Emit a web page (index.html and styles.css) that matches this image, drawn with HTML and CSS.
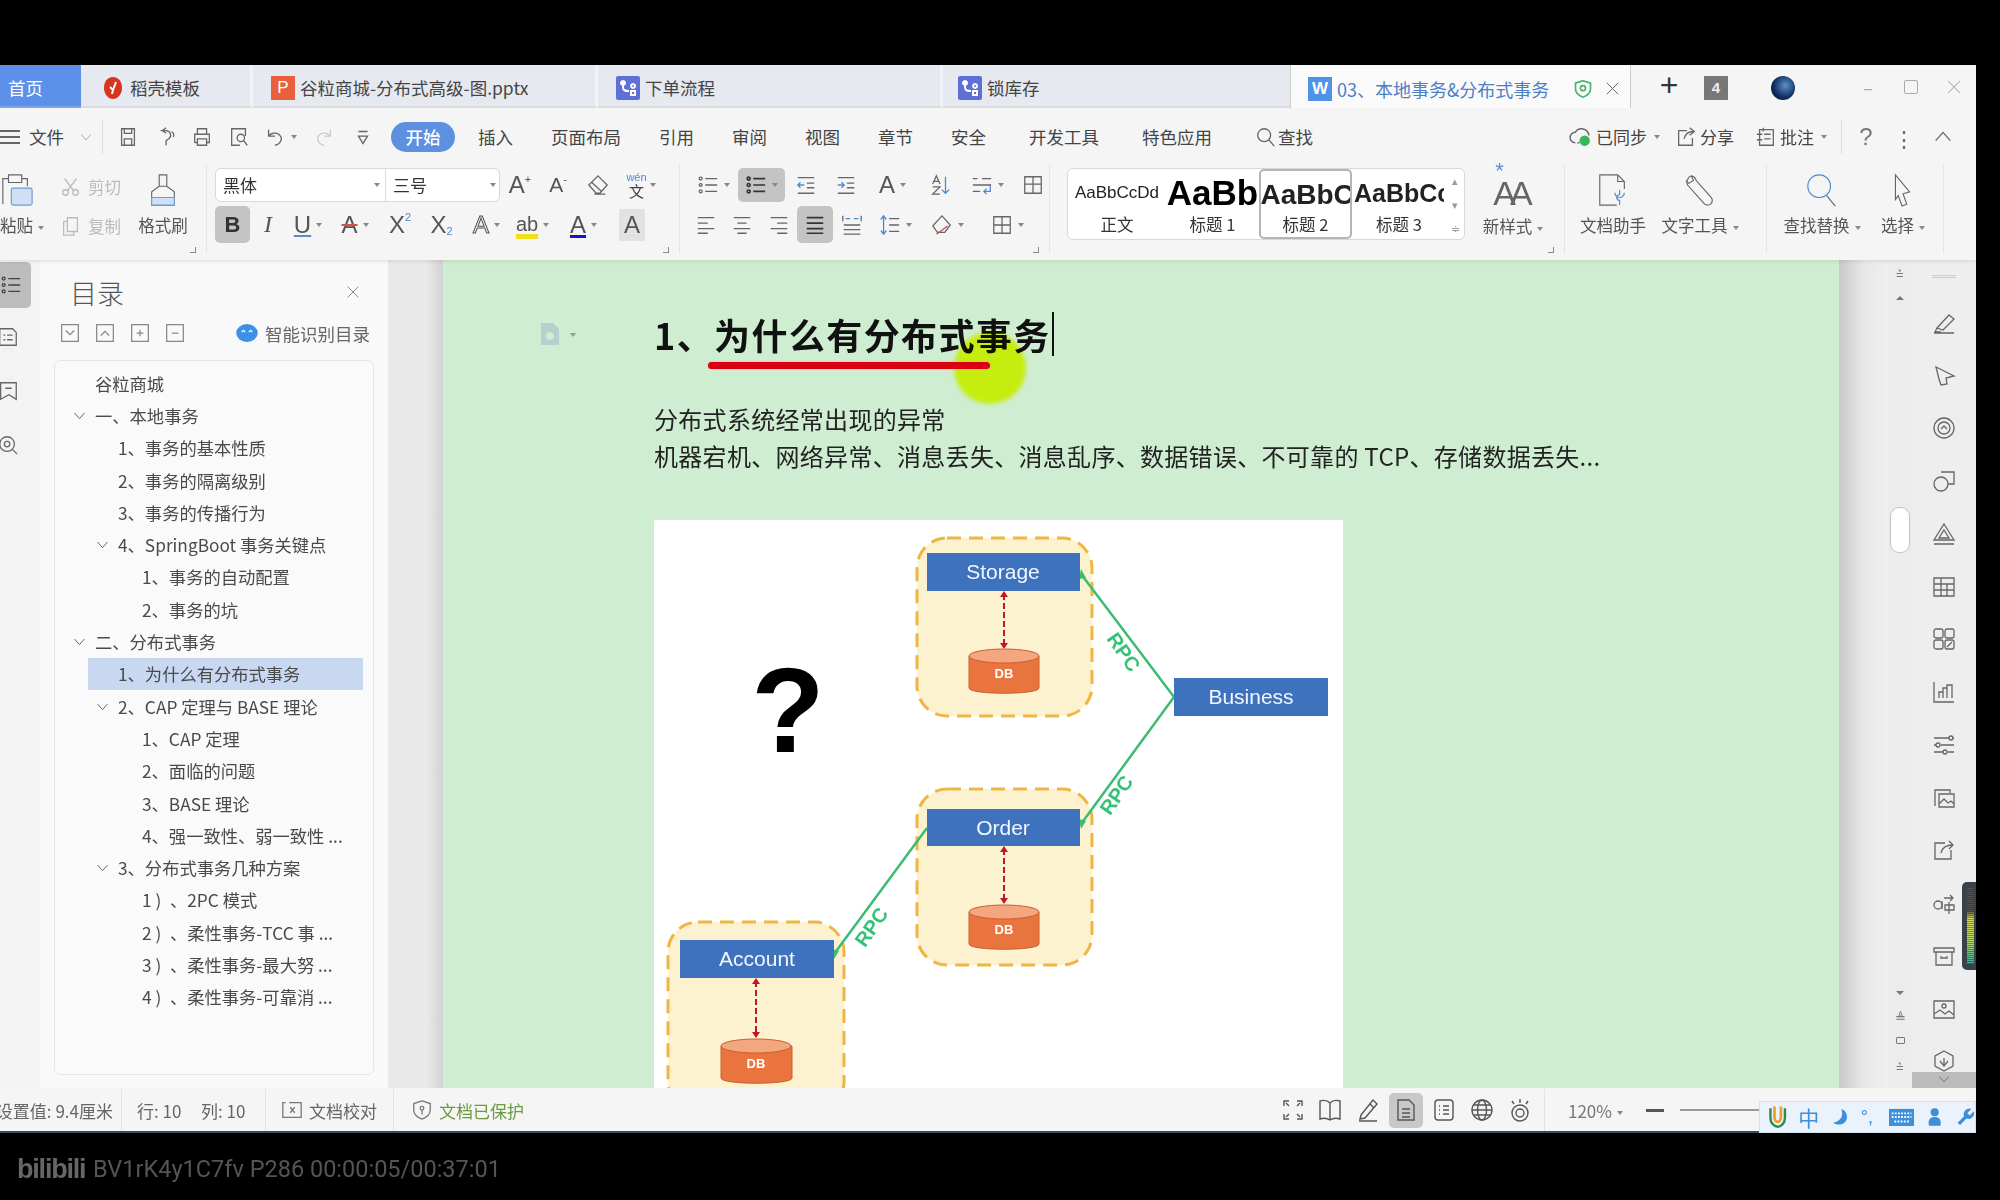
FILE: index.html
```html
<!DOCTYPE html>
<html lang="zh-CN">
<head>
    <meta charset="UTF-8">
    <title>03、本地事务&amp;分布式事务</title>
    <link rel="stylesheet" href="styles.css">
</head>
<body>
<svg class="defs" aria-hidden="true">
    <symbol id="i-save" viewBox="0 0 24 24"><path d="M5 3h14v18H5zM8 3v5h8V3M8 21v-7h8v7"/></symbol>
    <symbol id="i-link" viewBox="0 0 24 24"><path d="M5 5h6a5 5 0 0 1 3 9l-3 2v5M11 2l-4 3 4 3M17 6a5 5 0 0 1 2 6"/></symbol>
    <symbol id="i-print" viewBox="0 0 24 24"><path d="M7 9V3h10v6M4 18V9h16v9h-3M7 14h10v7H7zM7 18H4"/></symbol>
    <symbol id="i-preview" viewBox="0 0 24 24"><path d="M19 11V3H4v18h9M10 13a4 4 0 1 0 8 0 4 4 0 0 0-8 0M17 16l4 5"/></symbol>
    <symbol id="i-undo" viewBox="0 0 24 24"><path d="M5 4v7h7M5 11a8 8 0 0 1 14 2 8 8 0 0 1-7 8"/></symbol>
    <symbol id="i-redo" viewBox="0 0 24 24"><path d="M19 4v7h-7M19 11A8 8 0 0 0 5 13a8 8 0 0 0 7 8"/></symbol>
    <symbol id="i-more" viewBox="0 0 24 24"><path d="M7 6h10M7 11l5 8 5-8z"/></symbol>
    <symbol id="i-search" viewBox="0 0 24 24"><circle cx="10" cy="10" r="7"/><path d="M15 15l6 7"/></symbol>
    <symbol id="i-cloud" viewBox="0 0 24 24"><path d="M7 18a5 5 0 0 1 0-10 7 7 0 0 1 13 3M9 18h2"/><circle class="green" cx="16" cy="16" r="5"/></symbol>
    <symbol id="i-share" viewBox="0 0 24 24"><path d="M13 5H4v16h15v-8M10 14c1-5 4-8 10-8M16 2l5 4-5 4"/></symbol>
    <symbol id="i-note" viewBox="0 0 24 24"><path d="M5 4h15v17H5zM2 9h6M2 15h6M10 9h7M10 14h7M9 2v4"/></symbol>
    <symbol id="i-paste" viewBox="0 0 36 36"><path d="M3 33V6h6V2h14v4h6v8M9 6v4h14V6"/><rect class="tint" x="12" y="16" width="22" height="18" rx="2"/></symbol>
    <symbol id="i-scissors" viewBox="0 0 24 24"><circle cx="6" cy="18" r="3"/><circle cx="17" cy="18" r="3"/><path d="M8 16L18 3M15 16L5 3"/></symbol>
    <symbol id="i-copy" viewBox="0 0 24 24"><path d="M8 3h11v15H8zM8 7H4v15h11v-4"/></symbol>
    <symbol id="i-brush" viewBox="0 0 36 36"><path d="M14 2h8v12h-8zM14 14L6 20v14h24V20l-8-6"/><path class="tint" d="M6 26h24v8H6z"/></symbol>
    <symbol id="i-eraser" viewBox="0 0 24 24"><path d="M12 2l10 10-8 9H10l-8-9zM5 9l11 10M8 22h12"/></symbol>
    <symbol id="i-bullets" viewBox="0 0 24 24"><path d="M9 5h13M9 12h13M9 19h13"/><circle cx="4" cy="5" r="1.6"/><circle cx="4" cy="12" r="1.6"/><circle cx="4" cy="19" r="1.6"/></symbol>
    <symbol id="i-outdent" viewBox="0 0 24 24"><path d="M3 4h18M13 10h8M13 15h8M3 21h18"/><path class="blue" d="M10 12H3M6 9l-3 3 3 3"/></symbol>
    <symbol id="i-indent" viewBox="0 0 24 24"><path d="M3 4h18M13 10h8M13 15h8M3 21h18"/><path class="blue" d="M3 12h7M7 9l3 3-3 3"/></symbol>
    <symbol id="i-sort" viewBox="0 0 24 24"><path class="blue" d="M18 3v18M14 17l4 4 4-4"/><path d="M4 11l4-9 4 9M5 8h6M4 14h8l-8 8h8"/></symbol>
    <symbol id="i-wrap" viewBox="0 0 24 24"><path d="M2 5h5M12 5h10M2 12h20M2 19h8"/><path class="blue" d="M21 12v7h-7M17 16l-3 3 3 3"/></symbol>
    <symbol id="i-table-split" viewBox="0 0 24 24"><path d="M3 3h18v18H3zM3 11h18M12 3v18"/></symbol>
    <symbol id="i-left" viewBox="0 0 24 24"><path d="M3 4h18M3 10h11M3 16h18M3 21h11"/></symbol>
    <symbol id="i-center" viewBox="0 0 24 24"><path d="M3 4h18M7 10h10M3 16h18M7 21h10"/></symbol>
    <symbol id="i-right" viewBox="0 0 24 24"><path d="M3 4h18M10 10h11M3 16h18M10 21h11"/></symbol>
    <symbol id="i-justify" viewBox="0 0 24 24"><path d="M3 4h18M3 10h18M3 16h18M3 21h18"/></symbol>
    <symbol id="i-dist" viewBox="0 0 24 24"><path d="M3 12h18M3 17h18M3 22h18M2 2v6M22 2v6"/><path class="blue" d="M5 5h5M14 5h5"/></symbol>
    <symbol id="i-spacing" viewBox="0 0 24 24"><path d="M11 5h11M11 12h11M11 19h11"/><path class="blue" d="M5 2v20M2 6l3-4 3 4M2 18l3 4 3-4"/></symbol>
    <symbol id="i-shade" viewBox="0 0 24 24"><path d="M12 2l9 10-6 8H7l-5-7z"/><path class="red" d="M6 22L18 13"/></symbol>
    <symbol id="i-border" viewBox="0 0 24 24"><path d="M3 3h18v18H3zM12 3v18M3 12h18"/></symbol>
    <symbol id="i-doc-help" viewBox="0 0 36 36"><path d="M22 34H4V2h19l7 7v8M23 2v7h7"/><path class="blue" d="M25 18v5a3 3 0 0 0 0 6v5M20 21a5 5 0 0 0 10 0"/></symbol>
    <symbol id="i-wrench" viewBox="0 0 36 36"><path d="M9 3a7 7 0 0 0-4 10l17 19a4 4 0 0 0 8-6L14 8a7 7 0 0 0-5-5zM9 3l2 5-5 3-3-3"/></symbol>
    <symbol id="i-lens" viewBox="0 0 36 36"><circle class="blue" cx="15" cy="14" r="12"/><path d="M23 24l9 11"/></symbol>
    <symbol id="i-pointer" viewBox="0 0 36 36"><path d="M10 2l15 18-7 2 4 11-5 2-4-11-3 4z"/></symbol>
    <symbol id="i-list-r" viewBox="0 0 24 24"><path d="M3 3h14l4 4v14H3zM7 10h2M11 10h6M7 15h2M11 15h6"/></symbol>
    <symbol id="i-bookmark" viewBox="0 0 24 24"><path d="M4 3h17v18l-8-5-9 5zM9 9h7"/></symbol>
    <symbol id="i-find-doc" viewBox="0 0 24 24"><circle cx="11" cy="11" r="8"/><circle cx="11" cy="11" r="3"/><path d="M17 17l5 5"/></symbol>
    <symbol id="i-square-down" viewBox="0 0 24 24"><path d="M2 2h20v20H2zM7 9l5 5 5-5"/></symbol>
    <symbol id="i-square-up" viewBox="0 0 24 24"><path d="M2 2h20v20H2zM7 15l5-5 5 5"/></symbol>
    <symbol id="i-square-plus" viewBox="0 0 24 24"><path d="M2 2h20v20H2zM8 12h8M12 8v8"/></symbol>
    <symbol id="i-square-minus" viewBox="0 0 24 24"><path d="M2 2h20v20H2zM8 12h8"/></symbol>
    <symbol id="i-chev" viewBox="0 0 24 24"><path d="M4 8l8 9 8-9"/></symbol>
    <symbol id="i-close" viewBox="0 0 24 24"><path d="M4 4l16 16M20 4L4 20"/></symbol>
    <symbol id="t-pen" viewBox="0 0 24 24"><path d="M2 22h20M5 17L17 4l5 4-11 11zM5 17l-2 4h6"/></symbol>
    <symbol id="t-cursor" viewBox="0 0 24 24"><path d="M4 3l18 9-8 2 1 6-6 1-2-6z"/></symbol>
    <symbol id="t-badge" viewBox="0 0 24 24"><circle cx="12" cy="12" r="10"/><circle cx="12" cy="12" r="6"/><path d="M9 13l3-3 3 3"/></symbol>
    <symbol id="t-shapes" viewBox="0 0 24 24"><path d="M9 3h13v12H16"/><circle cx="9" cy="15" r="7"/></symbol>
    <symbol id="t-tri" viewBox="0 0 24 24"><path d="M12 2l10 16H2zM12 8l5 8H7zM2 22h20"/></symbol>
    <symbol id="t-table" viewBox="0 0 24 24"><path d="M2 3h20v18H2zM2 9h20M2 15h20M9 3v18M15 9v12"/></symbol>
    <symbol id="t-grid" viewBox="0 0 24 24"><rect x="2" y="2" width="9" height="9" rx="2"/><rect x="13" y="2" width="9" height="9" rx="2"/><rect x="2" y="13" width="9" height="9" rx="2"/><rect x="13" y="13" width="9" height="9" rx="2"/><path d="M15 20l5-5"/></symbol>
    <symbol id="t-chart" viewBox="0 0 24 24"><path d="M2 2v20h20M7 18v-6h4v6M11 18V8h4v10M15 18V5h5v13"/></symbol>
    <symbol id="t-sliders" viewBox="0 0 24 24"><path d="M2 5h15M21 5h1M2 12h2M9 12h13M2 19h9M16 19h6"/><circle cx="19" cy="5" r="2"/><circle cx="6" cy="12" r="2"/><circle cx="13" cy="19" r="2"/></symbol>
    <symbol id="t-images" viewBox="0 0 24 24"><path d="M3 20V4h15v3M7 8h15v13H7zM7 18l5-5 4 4 3-2 3 3"/></symbol>
    <symbol id="t-export" viewBox="0 0 24 24"><path d="M13 5H3v16h16v-9M9 15c1-5 5-8 12-8M17 3l4 4-4 4"/></symbol>
    <symbol id="t-translate" viewBox="0 0 24 24"><circle cx="6" cy="14" r="4"/><path d="M10 10v8M12 7h9M18 4l3 3-3 3M13 14h9v5h-9zM17 11v12"/></symbol>
    <symbol id="t-box" viewBox="0 0 24 24"><path d="M2 4h20v4H2zM4 8v13h16V8M9 12v2h6v-2"/></symbol>
    <symbol id="t-picture" viewBox="0 0 24 24"><path d="M2 4h20v17H2zM2 17l6-4 5 4 4-3 5 4"/><circle cx="12" cy="9" r="2"/></symbol>
    <symbol id="t-hex" viewBox="0 0 24 24"><path d="M12 2l9 5v10l-9 5-9-5V7zM12 9v8M8 12l4 5 4-5"/></symbol>
    <symbol id="s-fit" viewBox="0 0 24 24"><path d="M3 8V3h5M21 8V3h-5M3 16v5h5M21 16v5h-5M8 8L5 5M16 8l3-3M8 16l-3 3M16 16l3 3"/></symbol>
    <symbol id="s-book" viewBox="0 0 24 24"><path d="M12 5C9 2 5 2 2 3v18c3-1 7-1 10 1 3-2 7-2 10-1V3c-3-1-7-1-10 2zM12 5v17"/></symbol>
    <symbol id="s-pen" viewBox="0 0 24 24"><path d="M5 17L17 2l4 4L9 20l-5 1zM3 23h18M14 6l4 4"/></symbol>
    <symbol id="s-page" viewBox="0 0 24 24"><path d="M4 2h11l5 5v15H4zM8 11h8M8 15h8M8 19h8"/></symbol>
    <symbol id="s-outline" viewBox="0 0 24 24"><rect x="3" y="2" width="18" height="20" rx="3"/><path d="M7 8h1M11 8h6M7 12h1M11 12h6M7 16h1M11 16h6"/></symbol>
    <symbol id="s-globe" viewBox="0 0 24 24"><circle cx="12" cy="12" r="10"/><ellipse cx="12" cy="12" rx="4.5" ry="10"/><path d="M2 12h20M4 7h16M4 17h16"/></symbol>
    <symbol id="s-eye" viewBox="0 0 24 24"><circle cx="12" cy="15" r="8"/><circle cx="12" cy="15" r="4"/><path d="M12 1v4M4 3l2 3M20 3l-2 3"/></symbol>
    <symbol id="s-proof" viewBox="0 0 24 24"><path d="M9 4h13v16H2V4h3M2 20M10 9l5 6M15 9l-5 6"/></symbol>
    <symbol id="s-shield" viewBox="0 0 24 24"><path d="M12 2l9 3v7c0 5-4 8-9 10-5-2-9-5-9-10V5z"/><circle cx="12" cy="10" r="2"/><path d="M12 12v5"/></symbol>
</svg>

<div class="screen">
    <div class="topband"></div>

    <div class="window">
        <!-- tabs -->
        <div class="tabbar">
            <div class="tab tab-home">首页</div>
            <div class="tab tab-w169">
                <svg class="tabicon" viewBox="0 0 20 24"><path fill="#d8351f" d="M10 1c6 0 9 5 9 11s-4 11-9 11-9-5-9-11S4 1 10 1z"/><path fill="none" stroke="#fff" stroke-width="2" d="M13 6l-3 8-3-3M10 14l-1 4"/></svg>
                稻壳模板
            </div>
            <div class="tab tab-w345">
                <span class="tabicon ppt">P</span>
                谷粒商城-分布式高级-图.pptx
            </div>
            <div class="tab tab-w345">
                <svg class="tabicon" viewBox="0 0 24 24"><rect width="24" height="24" rx="2" fill="#5f6fd8"/><path fill="none" stroke="#fff" stroke-width="2" d="M7 5v6c0 4 3 4 6 4M7 5a2 2 0 1 0 .1 0M17 8a2 2 0 1 0 .1 0M15 15h4v4h-4z"/></svg>
                下单流程
            </div>
            <div class="tab tab-w348">
                <svg class="tabicon" viewBox="0 0 24 24"><rect width="24" height="24" rx="2" fill="#5f6fd8"/><path fill="none" stroke="#fff" stroke-width="2" d="M7 5v6c0 4 3 4 6 4M7 5a2 2 0 1 0 .1 0M17 8a2 2 0 1 0 .1 0M15 15h4v4h-4z"/></svg>
                锁库存
            </div>
            <div class="tab tab-active">
                <span class="tabicon word">W</span>
                <span class="tab-title">03、本地事务&amp;分布式事务</span>
                <svg class="tab-shield" viewBox="0 0 24 24"><path d="M12 2l9 3v7c0 5-4 8-9 10-5-2-9-5-9-10V5z"/><circle cx="12" cy="11" r="3"/></svg>
                <svg class="ic tab-close"><use href="#i-close"/></svg>
            </div>
            <div class="tab-plus">+</div>
            <div class="tab-count">4</div>
            <div class="avatar"></div>
            <div class="winbtns">
                <span class="winbtn">–</span>
                <span class="winbtn winbtn-restore"></span>
                <svg class="ic winx"><use href="#i-close"/></svg>
            </div>
        </div>

        <!-- menu row -->
        <div class="menubar">
            <div class="filemenu">
                <span class="burger"></span>
                <span>文件</span>
                <svg class="ic chev-s"><use href="#i-chev"/></svg>
            </div>
            <div class="qat">
                <svg class="ic"><use href="#i-save"/></svg>
                <svg class="ic"><use href="#i-link"/></svg>
                <svg class="ic"><use href="#i-print"/></svg>
                <svg class="ic"><use href="#i-preview"/></svg>
                <span class="qat-drop"><svg class="ic"><use href="#i-undo"/></svg><i class="tri"></i></span>
                <svg class="ic ic-dim"><use href="#i-redo"/></svg>
                <svg class="ic"><use href="#i-more"/></svg>
            </div>
            <div class="menutabs">
                <span class="pill">开始</span>
                <span>插入</span>
                <span>页面布局</span>
                <span>引用</span>
                <span>审阅</span>
                <span>视图</span>
                <span>章节</span>
                <span>安全</span>
                <span class="far">开发工具</span>
                <span class="far">特色应用</span>
                <span class="find far"><svg class="ic"><use href="#i-search"/></svg>查找</span>
            </div>
            <div class="menuright">
                <span class="mr mr-sync"><svg class="ic"><use href="#i-cloud"/></svg>已同步<i class="tri"></i></span>
                <span class="mr mr-share"><svg class="ic"><use href="#i-share"/></svg>分享</span>
                <span class="mr mr-note"><svg class="ic"><use href="#i-note"/></svg>批注<i class="tri"></i></span>
                <span class="mr-q">?</span>
                <span class="mr-dots">⋮</span>
                <svg class="ic mr-up"><use href="#i-chev"/></svg>
            </div>
        </div>

        <!-- ribbon -->
        <div class="ribbon">
            <div class="group g-clip">
                <div class="big">
                    <svg class="ic ic-big"><use href="#i-paste"/></svg>
                    <span class="big-label">粘贴<i class="tri"></i></span>
                </div>
                <div class="clip-col">
                    <span class="clip-item"><svg class="ic"><use href="#i-scissors"/></svg>剪切</span>
                    <span class="clip-item"><svg class="ic"><use href="#i-copy"/></svg>复制</span>
                </div>
                <div class="big">
                    <svg class="ic ic-big"><use href="#i-brush"/></svg>
                    <span class="big-label">格式刷</span>
                </div>
                <i class="corner"></i>
            </div>

            <div class="group g-font">
                <div class="row font-r1">
                    <div class="combo">
                        <span class="combo-name">黑体<i class="tri"></i></span>
                        <span class="combo-size">三号<i class="tri"></i></span>
                    </div>
                    <span class="cell glyph">A<sup>+</sup></span>
                    <span class="cell glyph glyph-s">A<sup>-</sup></span>
                    <span class="cell"><svg class="ic"><use href="#i-eraser"/></svg></span>
                    <span class="cell wen"><span class="wen-stack"><b>wén</b><span>文</span></span><i class="tri"></i></span>
                </div>
                <div class="row font-r2">
                    <span class="cell hl bold">B</span>
                    <span class="cell glyph italic">I</span>
                    <span class="cell glyph under">U<i class="tri"></i></span>
                    <span class="cell glyph strike">A<i class="tri"></i></span>
                    <span class="cell glyph">X<sup class="blue-t">2</sup></span>
                    <span class="cell glyph">X<sub class="blue-t">2</sub></span>
                    <span class="cell glyph outline">A<i class="tri"></i></span>
                    <span class="cell glyph mark">ab<i class="tri"></i></span>
                    <span class="cell glyph color-a">A<i class="tri"></i></span>
                    <span class="cell glyph shade-a">A</span>
                </div>
                <i class="corner"></i>
            </div>

            <div class="group g-para">
                <div class="row para-r1">
                    <span class="cell"><svg class="ic"><use href="#i-bullets"/></svg><i class="tri"></i></span>
                    <span class="cell hl"><svg class="ic ic-dark"><use href="#i-bullets"/></svg><i class="tri"></i></span>
                    <span class="cell"><svg class="ic"><use href="#i-outdent"/></svg></span>
                    <span class="cell"><svg class="ic"><use href="#i-indent"/></svg></span>
                    <span class="cell glyph">A<i class="tri"></i></span>
                    <span class="cell"><svg class="ic"><use href="#i-sort"/></svg></span>
                    <span class="cell"><svg class="ic"><use href="#i-wrap"/></svg><i class="tri"></i></span>
                    <span class="cell"><svg class="ic"><use href="#i-table-split"/></svg></span>
                </div>
                <div class="row para-r2">
                    <span class="cell"><svg class="ic"><use href="#i-left"/></svg></span>
                    <span class="cell"><svg class="ic"><use href="#i-center"/></svg></span>
                    <span class="cell"><svg class="ic"><use href="#i-right"/></svg></span>
                    <span class="cell hl"><svg class="ic ic-dark"><use href="#i-justify"/></svg></span>
                    <span class="cell"><svg class="ic"><use href="#i-dist"/></svg></span>
                    <span class="cell"><svg class="ic"><use href="#i-spacing"/></svg><i class="tri"></i></span>
                    <span class="cell"><svg class="ic"><use href="#i-shade"/></svg><i class="tri"></i></span>
                    <span class="cell"><svg class="ic"><use href="#i-border"/></svg><i class="tri"></i></span>
                </div>
                <i class="corner"></i>
            </div>

            <div class="group g-styles">
                <div class="stylebox">
                    <div class="style-item"><span class="sample s0">AaBbCcDd</span><span class="style-name">正文</span></div>
                    <div class="style-item"><span class="sample s1">AaBb</span><span class="style-name">标题 1</span></div>
                    <div class="style-item style-on"><span class="sample s2">AaBbC</span><span class="style-name">标题 2</span></div>
                    <div class="style-item"><span class="sample s3">AaBbCc</span><span class="style-name">标题 3</span></div>
                    <div class="style-scroll"><i>▴</i><i>▾</i><i>≑</i></div>
                </div>
                <div class="big big-new">
                    <span class="newstyle"><em>*</em>AA</span>
                    <span class="big-label">新样式<i class="tri"></i></span>
                </div>
                <i class="corner"></i>
            </div>

            <div class="group g-tools">
                <div class="big big-96">
                    <svg class="ic ic-big"><use href="#i-doc-help"/></svg>
                    <span class="big-label">文档助手</span>
                </div>
                <div class="big big-78">
                    <svg class="ic ic-big"><use href="#i-wrench"/></svg>
                    <span class="big-label">文字工具<i class="tri"></i></span>
                </div>
            </div>

            <div class="group g-find">
                <div class="big big-94">
                    <svg class="ic ic-big"><use href="#i-lens"/></svg>
                    <span class="big-label">查找替换<i class="tri"></i></span>
                </div>
                <div class="big big-68">
                    <svg class="ic ic-big"><use href="#i-pointer"/></svg>
                    <span class="big-label">选择<i class="tri"></i></span>
                </div>
            </div>
        </div>

        <!-- main area -->
        <div class="main">
            <div class="rail">
                <div class="rail-btn"><svg class="ic"><use href="#i-bullets"/></svg></div>
                <svg class="ic rail-ic"><use href="#i-list-r"/></svg>
                <svg class="ic rail-ic"><use href="#i-bookmark"/></svg>
                <svg class="ic rail-ic"><use href="#i-find-doc"/></svg>
            </div>

            <div class="toc-panel">
                <div class="toc-head">
                    <span class="toc-title">目录</span>
                    <svg class="ic toc-close"><use href="#i-close"/></svg>
                </div>
                <div class="toc-tools">
                    <svg class="ic"><use href="#i-square-down"/></svg>
                    <svg class="ic"><use href="#i-square-up"/></svg>
                    <svg class="ic"><use href="#i-square-plus"/></svg>
                    <svg class="ic"><use href="#i-square-minus"/></svg>
                    <span class="smart">
                        <svg class="smart-ic" viewBox="0 0 24 20"><ellipse cx="12" cy="10" rx="12" ry="10" fill="#3d8fe8"/><path d="M6 9l2-2 2 2M14 9l2-2 2 2" fill="none" stroke="#fff" stroke-width="1.4"/></svg>
                        智能识别目录
                    </span>
                </div>
                <div class="toc-box">
                    <div class="toc-row l0">谷粒商城</div>
                    <div class="toc-row l0"><svg class="ic arrow"><use href="#i-chev"/></svg>一、本地事务</div>
                    <div class="toc-row l1">1、事务的基本性质</div>
                    <div class="toc-row l1">2、事务的隔离级别</div>
                    <div class="toc-row l1">3、事务的传播行为</div>
                    <div class="toc-row l1"><svg class="ic arrow"><use href="#i-chev"/></svg>4、SpringBoot 事务关键点</div>
                    <div class="toc-row l2">1、事务的自动配置</div>
                    <div class="toc-row l2">2、事务的坑</div>
                    <div class="toc-row l0"><svg class="ic arrow"><use href="#i-chev"/></svg>二、分布式事务</div>
                    <div class="toc-row l1 toc-on">1、为什么有分布式事务</div>
                    <div class="toc-row l1"><svg class="ic arrow"><use href="#i-chev"/></svg>2、CAP 定理与 BASE 理论</div>
                    <div class="toc-row l2">1、CAP 定理</div>
                    <div class="toc-row l2">2、面临的问题</div>
                    <div class="toc-row l2">3、BASE 理论</div>
                    <div class="toc-row l2">4、强一致性、弱一致性 ...</div>
                    <div class="toc-row l1"><svg class="ic arrow"><use href="#i-chev"/></svg>3、分布式事务几种方案</div>
                    <div class="toc-row l2">1&nbsp;)&ensp;、2PC 模式</div>
                    <div class="toc-row l2">2&nbsp;)&ensp;、柔性事务-TCC 事 ...</div>
                    <div class="toc-row l2">3&nbsp;)&ensp;、柔性事务-最大努 ...</div>
                    <div class="toc-row l2">4&nbsp;)&ensp;、柔性事务-可靠消 ...</div>
                </div>
            </div>

            <div class="gutter"></div>

            <div class="doc">
                <svg class="margin-ic" viewBox="0 0 20 24"><path d="M1 1h12l6 6v16H1z"/><circle cx="10" cy="14" r="4" fill="#cfeccf"/></svg>
                <i class="margin-tri"></i>
                <div class="doc-body">
                    <h1 class="doc-title">1、为什么有分布式事务<span class="caret"></span></h1>
                    <p class="doc-text">分布式系统经常出现的异常<br>机器宕机、网络异常、消息丢失、消息乱序、数据错误、不可靠的 TCP、存储数据丢失...</p>
                    <svg class="diagram" viewBox="0 0 689 568">
                        <text class="q" x="134" y="232" text-anchor="middle">?</text>

                        <rect class="zone" x="263" y="18" width="175" height="178" rx="30"/>
                        <rect class="zone" x="263" y="269" width="175" height="176" rx="30"/>
                        <rect class="zone" x="14" y="402" width="176" height="190" rx="30"/>

                        <path class="rpc-line" d="M427 54L520 177L427 304M273 308L180 434"/>
                        <path class="rpc-tip" d="M427 49l5 9-7 1zM427 309l5-8-7-2zM180 439l5-8-7-2z"/>

                        <rect class="node" x="273" y="33" width="153" height="38"/>
                        <text class="node-t" x="349" y="59">Storage</text>
                        <rect class="node" x="520" y="158" width="154" height="38"/>
                        <text class="node-t" x="597" y="184">Business</text>
                        <rect class="node" x="273" y="289" width="153" height="37"/>
                        <text class="node-t" x="349" y="315">Order</text>
                        <rect class="node" x="26" y="420" width="154" height="38"/>
                        <text class="node-t" x="103" y="446">Account</text>

                        <path class="db-link" d="M350 74v52M350 329v52M102 461v56"/>
                        <path class="db-tip" d="M346 77l4-6 4 6zM346 123l4 6 4-6zM346 332l4-6 4 6zM346 378l4 6 4-6zM98 464l4-6 4 6zM98 512l4 6 4-6z"/>

                        <path class="db-body" d="M315 136v32c0 7 70 7 70 0v-32z"/>
                        <ellipse class="db-top" cx="350" cy="136" rx="35" ry="7"/>
                        <text class="db-t" x="350" y="158">DB</text>
                        <path class="db-body" d="M315 392v32c0 7 70 7 70 0v-32z"/>
                        <ellipse class="db-top" cx="350" cy="392" rx="35" ry="7"/>
                        <text class="db-t" x="350" y="414">DB</text>
                        <path class="db-body" d="M67 526v32c0 7 71 7 71 0v-32z"/>
                        <ellipse class="db-top" cx="102" cy="526" rx="35" ry="7"/>
                        <text class="db-t" x="102" y="548">DB</text>

                        <text class="rpc" transform="translate(464 136) rotate(55)">RPC</text>
                        <text class="rpc" transform="translate(468 279) rotate(-55)">RPC</text>
                        <text class="rpc" transform="translate(223 411) rotate(-55)">RPC</text>
                    </svg>
                </div>
                <!-- presenter's pen and pointer over the page -->
                <div class="pointer"></div>
                <div class="pen-line"></div>
            </div>

            <div class="gutter-r"></div>

            <div class="vscroll">
                <span class="vs-top">⩮</span>
                <span class="vs-up"></span>
                <span class="vs-thumb"></span>
                <span class="vs-down"></span>
                <span class="vs-mini">≜</span>
                <span class="vs-dot"></span>
                <span class="vs-mini">⩮</span>
            </div>

            <div class="toolstrip">
                <span class="strip-grip"></span>
                <svg class="ic"><use href="#t-pen"/></svg>
                <svg class="ic"><use href="#t-cursor"/></svg>
                <svg class="ic"><use href="#t-badge"/></svg>
                <svg class="ic"><use href="#t-shapes"/></svg>
                <svg class="ic"><use href="#t-tri"/></svg>
                <svg class="ic"><use href="#t-table"/></svg>
                <svg class="ic"><use href="#t-grid"/></svg>
                <svg class="ic"><use href="#t-chart"/></svg>
                <svg class="ic"><use href="#t-sliders"/></svg>
                <svg class="ic"><use href="#t-images"/></svg>
                <svg class="ic"><use href="#t-export"/></svg>
                <svg class="ic"><use href="#t-translate"/></svg>
                <svg class="ic"><use href="#t-box"/></svg>
                <svg class="ic"><use href="#t-picture"/></svg>
                <svg class="ic"><use href="#t-hex"/></svg>
                <div class="strip-foot"><svg class="ic"><use href="#i-chev"/></svg></div>
                <div class="meter"><i></i></div>
            </div>
        </div>

        <!-- status bar -->
        <div class="statusbar">
            <span class="st st-pos">设置值: 9.4厘米</span>
            <span class="st st-line">行: 10</span>
            <span class="st st-col">列: 10</span>
            <span class="st st-proof"><svg class="ic"><use href="#s-proof"/></svg>文档校对</span>
            <span class="st st-safe"><svg class="ic"><use href="#s-shield"/></svg>文档已保护</span>
            <div class="views">
                <svg class="ic"><use href="#s-fit"/></svg>
                <svg class="ic"><use href="#s-book"/></svg>
                <svg class="ic"><use href="#s-pen"/></svg>
                <span class="view-on"><svg class="ic"><use href="#s-page"/></svg></span>
                <svg class="ic"><use href="#s-outline"/></svg>
                <svg class="ic"><use href="#s-globe"/></svg>
                <svg class="ic"><use href="#s-eye"/></svg>
            </div>
            <span class="zoomval">120%<i class="tri"></i></span>
            <span class="zoom-minus"></span>
            <span class="zoom-line"></span>
        </div>
        <!-- input method bar sits over the status bar -->
        <div class="ime">
            <svg class="ime-u" viewBox="0 0 24 32"><path d="M3 5v12a9 11 0 0 0 18 0V5" fill="none" stroke="#2e8b57" stroke-width="3"/><path d="M8 3v13a4 6 0 0 0 8 0V3" fill="none" stroke="#f0a020" stroke-width="3.4"/></svg>
            <span class="ime-t">中</span>
            <svg class="ime-s" viewBox="0 0 24 24"><path d="M14 2c3 8 0 15-10 17 8 6 18 0 17-8 0-4-3-8-7-9z" fill="#3d8fd8"/></svg>
            <span class="ime-p">°,</span>
            <svg class="ime-k" viewBox="0 0 28 24"><rect y="3" width="28" height="19" fill="#3d8fd8"/><path d="M3 8h22M3 12h22M6 17h16" stroke="#fff" stroke-width="2" stroke-dasharray="2 1.5"/></svg>
            <svg class="ime-s" viewBox="0 0 24 24"><circle cx="12" cy="6" r="5" fill="#3d8fd8"/><path d="M5 23c-2-8 2-11 7-11s9 3 7 11z" fill="#3d8fd8"/></svg>
            <svg class="ime-s" viewBox="0 0 24 24"><path d="M22 5l-5 5-3-3 5-5a7 7 0 0 0-9 9L2 19l3 3 8-8a7 7 0 0 0 9-9z" fill="#3d8fd8"/></svg>
        </div>
    </div>

    <div class="videobar">
        <span class="bili">bilibili</span>
        <span class="vid">BV1rK4y1C7fv P286 00:00:05/00:37:01</span>
    </div>
</div>
</body>
</html>
```

FILE: styles.css
```css
* {
    box-sizing: border-box;
}
html, body {
    margin: 0;
    height: 100%;
    background: #000;
    overflow: hidden;
}
body {
    font-family: "Noto Sans CJK SC", "Liberation Sans", sans-serif;
    font-size: 17px;
    color: #444;
}
.defs {
    display: none;
}
.screen {
    width: 2000px;
    height: 1200px;
    filter: blur(0.45px);
}
.topband {
    height: 65px;
    background: #000;
}
.window {
    position: relative;
    width: 1976px;
    height: 1068px;
    display: flex;
    flex-direction: column;
    background: #f5f5f5;
    overflow: hidden;
}

/* icons */
.ic {
    width: 22px;
    height: 22px;
    fill: none;
    stroke: #666;
    stroke-width: 1.4;
    flex: none;
}
.ic-big {
    width: 34px;
    height: 34px;
    stroke-width: 1.2;
}
.ic-dim {
    stroke: #ccc;
}
.ic-dark {
    stroke: #333;
    stroke-width: 1.8;
}
.blue {
    stroke: #4a8ad4;
}
.red {
    stroke: #d84a4a;
}
.green {
    fill: #3bb55a;
    stroke: none;
}
.tint {
    fill: #cfe0f4;
    stroke: #6f9bd0;
}
.tri {
    display: inline-block;
    width: 0;
    height: 0;
    margin-left: 5px;
    border-left: 3px solid transparent;
    border-right: 3px solid transparent;
    border-top: 4px solid #888;
    vertical-align: middle;
}

/* tab bar */
.tabbar {
    height: 43px;
    display: flex;
    align-items: stretch;
    background: #f5f5f5;
}
.tab {
    display: flex;
    align-items: center;
    gap: 5px;
    padding-top: 4px;
    padding-left: 18px;
    background: #e6e9f0;
    border-right: 3px solid #f2f3f6;
    border-bottom: 2px solid #d9dbe0;
    font-size: 17.5px;
    color: #444;
}
.tab-home {
    width: 81px;
    padding-left: 8px;
    background: #5d90e8;
    color: #fff;
    border: 0;
    border-bottom: 2px solid #7ba6ec;
}
.tab-w169 {
    width: 172px;
    padding-left: 20px;
}
.tab-w345 {
    width: 345px;
}
.tab-w348 {
    width: 350px;
    padding-left: 15px;
}
.tabicon {
    width: 24px;
    height: 24px;
    flex: none;
    display: flex;
    align-items: center;
    justify-content: center;
    color: #fff;
    font-family: "Liberation Sans", sans-serif;
    font-size: 17px;
}
.ppt {
    background: #e8603c;
}
.word {
    background: #4f93e6;
    font-weight: bold;
}
.tab-active {
    width: 341px;
    padding-left: 17px;
    background: #fafafa;
    border-right: 1px solid #ccc;
    border-left: 1px solid #ccc;
    border-bottom: 0;
    margin-left: -3px;
}
.tab-title {
    width: 231px;
    white-space: nowrap;
    font-size: 18px;
    color: #4a80c8;
}
.tab-shield {
    width: 20px;
    height: 20px;
    flex: none;
    fill: none;
    stroke: #4ab46a;
    stroke-width: 2;
}
.tab-close {
    width: 17px;
    height: 17px;
    margin-left: 6px;
}
.tab-plus {
    width: 34px;
    margin-left: 21px;
    text-align: center;
    font-family: "Liberation Sans", sans-serif;
    font-size: 32px;
    line-height: 40px;
    color: #333;
}
.tab-count {
    width: 24px;
    height: 24px;
    margin: 11px 0 0 18px;
    background: #777;
    color: #eee;
    font-family: "Liberation Sans", sans-serif;
    font-size: 15px;
    font-weight: bold;
    line-height: 24px;
    text-align: center;
}
.avatar {
    width: 24px;
    height: 24px;
    margin: 11px 0 0 43px;
    border-radius: 50%;
    background: radial-gradient(circle at 60% 40%, #5d8fc8, #0d2a5c 60%, #06122e);
}
.winbtns {
    display: flex;
    align-items: center;
    gap: 27px;
    margin-left: 64px;
    color: #aaa;
}
.winbtn {
    width: 18px;
    text-align: center;
    font-size: 18px;
}
.winbtn-restore {
    width: 14px;
    height: 14px;
    border: 1.5px solid #aaa;
    border-radius: 2px;
}
.winx {
    width: 18px;
    height: 18px;
    stroke: #aaa;
}

/* menu row */
.menubar {
    height: 57px;
    display: flex;
    align-items: center;
    font-size: 17.5px;
    background: #f5f5f5;
}
.filemenu {
    width: 103px;
    height: 34px;
    display: flex;
    align-items: center;
    gap: 9px;
    border-right: 1px solid #ddd;
}
.burger {
    width: 20px;
    height: 14px;
    border-top: 2px solid #666;
    border-bottom: 2px solid #666;
    position: relative;
}
.burger::after {
    content: "";
    position: absolute;
    left: 0;
    right: 0;
    top: 4px;
    height: 2px;
    background: #666;
}
.chev-s {
    width: 14px;
    height: 14px;
    margin-left: 6px;
    stroke: #999;
}
.qat {
    width: 288px;
    display: grid;
    grid-template-columns: 42px 35px 36px 37px 46px 42px 36px;
    justify-items: center;
    align-items: center;
    padding-left: 4px;
}
.qat-drop {
    display: flex;
    align-items: center;
}
.menutabs {
    display: flex;
    align-items: center;
    gap: 38px;
    width: 1177px;
}
.menutabs .pill {
    width: 64px;
    height: 30px;
    margin-right: -15px;
    border-radius: 15px;
    background: #5d90e0;
    color: #fff;
    font-weight: 500;
    text-align: center;
    line-height: 29px;
}
.menutabs .far {
    margin-left: 5px;
}
.find {
    display: flex;
    align-items: center;
    gap: 1px;
}
.menuright {
    display: flex;
    align-items: center;
    font-size: 17px;
}
.mr {
    display: flex;
    align-items: center;
    gap: 3px;
}
.mr .tri {
    margin-left: 4px;
}
.mr-sync {
    width: 107px;
}
.mr-sync .ic {
    width: 25px;
    height: 25px;
}
.mr-share {
    width: 80px;
}
.mr-note {
    width: 87px;
    height: 34px;
    border-right: 1px solid #ddd;
}
.mr-q {
    width: 48px;
    text-align: center;
    font-size: 24px;
    font-family: "Liberation Sans", sans-serif;
    color: #777;
}
.mr-dots {
    width: 28px;
    text-align: center;
    font-size: 22px;
    color: #666;
}
.mr-up {
    margin-left: 14px;
    transform: rotate(180deg);
}

/* ribbon */
.ribbon {
    height: 95px;
    display: flex;
    background: #f5f5f5;
    box-shadow: 0 2px 3px rgba(0, 0, 0, 0.08);
    position: relative;
    z-index: 1;
}
.group {
    position: relative;
    height: 88px;
    border-right: 1px solid #e4e4e4;
    flex: none;
}
.corner {
    position: absolute;
    right: 10px;
    bottom: 0;
    width: 6px;
    height: 6px;
    border-right: 1px solid #888;
    border-bottom: 1px solid #888;
}
.big {
    display: flex;
    flex-direction: column;
    align-items: center;
    padding-top: 8px;
    flex: none;
}
.big-label {
    margin-top: 5px;
    font-size: 16.5px;
    line-height: 26px;
    white-space: nowrap;
    color: #555;
}
.g-clip {
    width: 207px;
    display: grid;
    grid-template-columns: 46px 86px 62px;
}
.g-clip .big:first-child {
    align-items: flex-start;
}
.clip-col {
    display: flex;
    flex-direction: column;
    gap: 15px;
    padding: 10px 0 0 14px;
    color: #bbb;
    font-size: 16.5px;
}
.clip-item {
    display: flex;
    align-items: center;
    gap: 6px;
    line-height: 24px;
}
.clip-item .ic {
    stroke: #bbb;
}
.row {
    display: grid;
    align-items: center;
    justify-items: center;
}
.cell {
    width: 100%;
    height: 100%;
    display: flex;
    align-items: center;
    justify-content: center;
    white-space: nowrap;
}
.hl {
    background: #c4c4c4;
    border-radius: 5px;
}
.glyph {
    font-family: "Liberation Sans", sans-serif;
    font-size: 24px;
    font-weight: 400;
    color: #555;
}
.glyph sup, .glyph sub {
    font-size: 11px;
    align-self: flex-start;
    margin-top: 5px;
}
.glyph sub {
    align-self: flex-end;
    margin: 0 0 6px;
}
.blue-t {
    color: #4a8ad4;
}
.glyph-s {
    font-size: 21px;
}
.bold {
    font-family: "Liberation Sans", sans-serif;
    font-size: 22px;
    font-weight: bold;
    color: #333;
}
.italic {
    font-family: "Liberation Serif", serif;
    font-style: italic;
}
.under {
    text-decoration: underline;
    text-decoration-color: #5a8ad0;
}
.strike {
    text-decoration: line-through;
    text-decoration-color: #d05050;
}
.outline {
    color: transparent;
    -webkit-text-stroke: 1px #555;
}
.mark {
    font-size: 20px;
    text-decoration: underline 5px #f0e020;
}
.color-a {
    text-decoration: underline 3px #1414c8;
}
.shade-a {
    height: 32px;
    background: #e2e2e2;
    width: 26px;
    justify-self: center;
}
.wen .tri {
    margin-left: 3px;
}
.wen-stack {
    display: flex;
    flex-direction: column;
    align-items: center;
    font-size: 15px;
    line-height: 16px;
}
.wen-stack b {
    font-family: "Liberation Sans", sans-serif;
    font-size: 11px;
    line-height: 12px;
    font-weight: normal;
    color: #4a8ad4;
}
.g-font {
    width: 473px;
    padding: 3px 0 0 8px;
}
.font-r1 {
    height: 34px;
    grid-template-columns: 285px 40px 36px 44px 42px;
}
.font-r2 {
    height: 37px;
    margin-top: 4px;
    grid-template-columns: 35px 36px 44px 50px 40px 43px 47px 45px 57px 40px;
}
.combo {
    width: 100%;
    height: 100%;
    display: grid;
    grid-template-columns: 169px 116px;
    background: #fff;
    border: 1px solid #d8d8d8;
    border-radius: 6px;
    line-height: 32px;
}
.combo-name, .combo-size {
    display: flex;
    align-items: center;
    justify-content: space-between;
    padding: 0 5px 0 7px;
    color: #333;
}
.combo-size {
    border-left: 1px solid #ddd;
}
.g-para {
    width: 370px;
    padding: 3px 0 0 8px;
}
.para-r1 {
    height: 34px;
    grid-template-columns: 50px 47px 42px 38px 55px 40px 55px 35px;
}
.para-r2 {
    height: 37px;
    margin-top: 4px;
    grid-template-columns: 35px 38px 36px 36px 37px 50px 55px 65px;
}
.g-styles {
    width: 515px;
    display: flex;
    padding: 3px 0 0 17px;
}
.stylebox {
    width: 398px;
    height: 72px;
    display: grid;
    grid-template-columns: 98px 93px 93px 94px 18px;
    background: #fff;
    border: 1px solid #d8d8d8;
    border-radius: 6px;
}
.style-item {
    display: flex;
    flex-direction: column;
    align-items: center;
    overflow: hidden;
}
.style-on {
    border: 2px solid #b5b5b5;
    border-radius: 5px;
}
.sample {
    height: 42px;
    line-height: 48px;
    font-family: "Liberation Sans", sans-serif;
    white-space: nowrap;
    color: #222;
}
.s0 {
    font-size: 17px;
}
.s1 {
    font-size: 35px;
    font-weight: bold;
    color: #000;
}
.s2 {
    font-size: 28px;
    font-weight: bold;
    width: 90px;
    overflow: hidden;
}
.s3 {
    font-size: 25px;
    font-weight: bold;
    width: 90px;
    overflow: hidden;
}
.style-name {
    font-size: 16.5px;
    line-height: 26px;
    color: #333;
}
.style-scroll {
    display: flex;
    flex-direction: column;
    align-items: center;
    justify-content: space-between;
    font-size: 11px;
    line-height: 22px;
    color: #999;
}
.style-scroll i {
    font-style: normal;
}
.big-new {
    width: 86px;
    margin-left: 5px;
    padding-top: 0;
}
.newstyle {
    position: relative;
    height: 40px;
    font-family: "Liberation Sans", sans-serif;
    font-size: 34px;
    line-height: 50px;
    letter-spacing: -6px;
    padding-right: 6px;
    color: #666;
}
.newstyle em {
    position: absolute;
    top: -12px;
    left: 2px;
    font-style: normal;
    font-size: 22px;
    line-height: 30px;
    color: #5d90d0;
}
.g-tools {
    width: 202px;
    display: flex;
    padding-left: 0;
    height: 88px;
}
.big-96 {
    width: 96px;
}
.big-78 {
    width: 78px;
}
.g-find {
    width: 177px;
    display: flex;
    padding-left: 8px;
}
.big-94 {
    width: 94px;
}
.big-68 {
    width: 68px;
}

/* main area */
.main {
    height: 828px;
    display: flex;
    overflow: hidden;
}
.rail {
    width: 40px;
    flex: none;
    display: flex;
    flex-direction: column;
    background: #f3f3f3;
}
.rail-btn {
    width: 31px;
    height: 46px;
    margin-top: 2px;
    display: flex;
    align-items: center;
    justify-content: flex-end;
    background: #bdbdbd;
    border-radius: 0 5px 5px 0;
}
.rail-btn .ic {
    stroke: #444;
    margin-right: 9px;
}
.rail-ic {
    margin: 18px 0 14px -3px;
}
.toc-panel {
    width: 348px;
    flex: none;
    display: flex;
    flex-direction: column;
    padding: 0 14px;
    background: #f9f9f9;
}
.toc-head {
    height: 56px;
    display: flex;
    align-items: center;
    justify-content: space-between;
    padding: 8px 13px 0 16px;
}
.toc-title {
    font-size: 27px;
    color: #555;
    font-weight: 300;
}
.toc-close {
    width: 16px;
    height: 16px;
    stroke: #888;
}
.toc-tools {
    height: 34px;
    display: flex;
    align-items: center;
    gap: 15px;
    padding-left: 6px;
}
.toc-tools .ic {
    width: 20px;
    height: 20px;
    stroke: #888;
    stroke-width: 1.5;
}
.smart {
    display: flex;
    align-items: center;
    gap: 7px;
    margin-left: 36px;
    font-size: 17.5px;
    color: #666;
    white-space: nowrap;
}
.smart-ic {
    width: 22px;
    height: 18px;
}
.toc-box {
    height: 715px;
    margin-top: 10px;
    padding-top: 6px;
    background: #fafafa;
    border: 1px solid #e6e6e6;
    border-radius: 6px;
}
.toc-row {
    position: relative;
    height: 32.3px;
    display: flex;
    align-items: center;
    font-size: 17.3px;
    white-space: nowrap;
    color: #4a4a4a;
}
.l0 {
    padding-left: 40px;
}
.l1 {
    padding-left: 63px;
}
.l2 {
    padding-left: 87px;
}
.toc-on {
    margin: 0 10px 0 33px;
    padding-left: 30px;
    background: #c7d8f0;
}
.arrow {
    width: 15px;
    height: 15px;
    margin-left: -23px;
    margin-right: 8px;
    stroke: #555;
}

.gutter {
    width: 55px;
    flex: none;
    background: linear-gradient(to right, #e9e9e9 70%, #d2d2d2);
}
.doc {
    position: relative;
    width: 1396px;
    flex: none;
    background: #cfedd1;
    overflow: hidden;
}
.doc-body {
    padding: 52px 0 0 211px;
}
.margin-ic {
    position: absolute;
    left: 97px;
    top: 62px;
    width: 20px;
    height: 24px;
    fill: #b8cfd0;
}
.margin-tri {
    position: absolute;
    left: 127px;
    top: 73px;
    border-left: 3px solid transparent;
    border-right: 3px solid transparent;
    border-top: 4px solid #999;
}
.doc-title {
    display: flex;
    margin: 0;
    height: 44px;
    font-size: 36px;
    font-weight: bold;
    line-height: 44px;
    letter-spacing: 1.4px;
    color: #111;
}
.caret {
    width: 2px;
    height: 44px;
    margin-left: 1px;
    background: #111;
}
.doc-text {
    margin: 43.5px 0 0;
    font-size: 24px;
    line-height: 37px;
    letter-spacing: 0.3px;
    color: #222;
    white-space: nowrap;
}
.diagram {
    display: block;
    width: 689px;
    height: 568px;
    margin-top: 46px;
    background: #fff;
}
.q {
    font-family: "Liberation Sans", sans-serif;
    font-size: 120px;
    font-weight: bold;
    fill: #000;
}
.zone {
    fill: #fdf2cf;
    stroke: #efb644;
    stroke-width: 3;
    stroke-dasharray: 14 8;
}
.node {
    fill: #3f72bd;
}
.node-t {
    font-family: "Liberation Sans", sans-serif;
    font-size: 21px;
    fill: #f2f6ff;
    text-anchor: middle;
}
.rpc-line {
    fill: none;
    stroke: #3dbb72;
    stroke-width: 2.5;
}
.rpc-tip {
    fill: #3dbb72;
}
.rpc {
    font-family: "Liberation Sans", sans-serif;
    font-size: 20px;
    font-weight: bold;
    fill: #35c277;
    text-anchor: middle;
}
.db-link {
    fill: none;
    stroke: #c3152e;
    stroke-width: 2;
    stroke-dasharray: 6 3;
}
.db-tip {
    fill: #c3152e;
}
.db-body {
    fill: #e9743d;
    stroke: #c9602f;
}
.db-top {
    fill: #f4a67e;
    stroke: #c9602f;
}
.db-t {
    font-family: "Liberation Sans", sans-serif;
    font-size: 13px;
    font-weight: bold;
    fill: #fff;
    text-anchor: middle;
}
.pointer {
    position: absolute;
    left: 511px;
    top: 72px;
    width: 72px;
    height: 72px;
    border-radius: 50%;
    background: #f4ff10;
    mix-blend-mode: multiply;
    filter: blur(2px);
}
.pen-line {
    position: absolute;
    left: 265px;
    top: 102px;
    width: 282px;
    height: 7px;
    border-radius: 4px;
    background: #d90012;
    box-shadow: 0 0 2px #f6a0a0;
}

.gutter-r {
    width: 49px;
    flex: none;
    background: linear-gradient(to right, #c8c8c8, #e8e8e8 50%, #efefef);
}
.vscroll {
    width: 24px;
    flex: none;
    display: flex;
    flex-direction: column;
    align-items: center;
    padding-top: 6px;
    background: #ececec;
    color: #777;
    font-size: 13px;
    line-height: 14px;
}
.vs-top {
    height: 24px;
}
.vs-up, .vs-down {
    width: 0;
    height: 0;
    border-left: 4px solid transparent;
    border-right: 4px solid transparent;
}
.vs-up {
    margin-top: 6px;
    border-bottom: 4px solid #777;
}
.vs-thumb {
    width: 20px;
    height: 46px;
    margin-top: 207px;
    background: #fff;
    border: 1px solid #c4c4c4;
    border-radius: 9px;
}
.vs-down {
    margin-top: 438px;
    border-top: 4px solid #777;
}
.vs-mini {
    margin-top: 15px;
}
.vs-dot {
    width: 9px;
    height: 7px;
    margin-top: 13px;
    border: 1px solid #777;
    border-radius: 1px;
}
.toolstrip {
    position: relative;
    width: 64px;
    flex: none;
    display: flex;
    flex-direction: column;
    align-items: center;
    gap: 28.75px;
    padding-top: 15px;
    background: #eeeeee;
}
.toolstrip > .ic {
    width: 26px;
    height: 24px;
    stroke: #666;
    stroke-width: 1.3;
}
.strip-grip {
    width: 24px;
    height: 3px;
    margin-bottom: 4px;
    border-top: 1px solid #ccc;
    border-bottom: 1px solid #ccc;
}
.strip-foot {
    position: absolute;
    left: 0;
    right: 0;
    bottom: 0;
    height: 16px;
    display: flex;
    justify-content: center;
    background: #bcbcbc;
}
.strip-foot .ic {
    width: 16px;
    height: 14px;
}
.meter {
    position: absolute;
    right: 0;
    top: 622px;
    width: 14px;
    height: 88px;
    padding: 6px 0 6px 5px;
    background: #39414a;
    border-radius: 5px 0 0 5px;
}
.meter i {
    display: block;
    width: 7px;
    height: 100%;
    background: repeating-linear-gradient(to bottom, transparent 0 1px, rgba(0, 0, 0, 0.35) 1px 2px), linear-gradient(to bottom, #555 30%, #d6d65a 40%, #b6d86a 70%, #3aa89a);
}

/* status bar */
.statusbar {
    height: 45px;
    display: flex;
    align-items: center;
    padding-top: 1px;
    background: #f5f5f5;
    border-bottom: 2px solid #33505c;
    font-size: 17px;
    color: #666;
    white-space: nowrap;
}
.st {
    display: flex;
    align-items: center;
    height: 100%;
}
.st-pos {
    width: 122px;
    justify-content: flex-end;
    padding-right: 8px;
    border-right: 1px solid #e2e2e2;
}
.st-line {
    width: 79px;
    padding-left: 15px;
}
.st-col {
    width: 65px;
    border-right: 1px solid #e2e2e2;
}
.st-proof {
    width: 128px;
    gap: 6px;
    padding-left: 15px;
    border-right: 1px solid #e2e2e2;
}
.st-safe {
    width: 855px;
    gap: 6px;
    padding-left: 17px;
    color: #6c9a40;
}
.st-safe .ic, .st-proof .ic {
    stroke: #777;
}
.views {
    width: 296px;
    height: 100%;
    display: grid;
    grid-template-columns: 37px 38px 38px 38px 38px 38px 38px;
    justify-items: center;
    align-items: center;
    padding-left: 25px;
    border-right: 1px solid #e2e2e2;
}
.views .ic {
    width: 24px;
    height: 24px;
    stroke: #555;
}
.view-on {
    width: 34px;
    height: 35px;
    display: flex;
    align-items: center;
    justify-content: center;
    background: #c8c8c8;
    border-radius: 5px;
}
.zoomval {
    margin-left: 23px;
    width: 78px;
    font-size: 17px;
    color: #777;
}
.zoom-minus {
    width: 18px;
    height: 3px;
    background: #555;
}
.zoom-line {
    width: 90px;
    height: 2px;
    margin-left: 16px;
    background: #999;
}
.ime {
    position: absolute;
    right: 0;
    bottom: 0;
    width: 217px;
    height: 32px;
    display: flex;
    align-items: center;
    gap: 11px;
    padding-left: 8px;
    background: #eaf3fb;
    border: 1px solid #d4e2f0;
}
.ime-u {
    width: 20px;
    height: 28px;
}
.ime-t {
    font-size: 21px;
    color: #3d8fd8;
}
.ime-s {
    width: 20px;
    height: 22px;
}
.ime-p {
    width: 18px;
    font-family: "Liberation Sans", sans-serif;
    font-size: 18px;
    color: #3d8fd8;
}
.ime-k {
    width: 26px;
    height: 22px;
}

/* video caption under the window */
.videobar {
    height: 67px;
    display: flex;
    align-items: center;
    padding: 4px 0 0 17px;
}
.bili {
    width: 76px;
    flex: none;
    font-family: "Liberation Sans", sans-serif;
    font-size: 27px;
    font-weight: bold;
    letter-spacing: -1.2px;
    color: #666;
    line-height: 40px;
}
.vid {
    font-family: "Roboto", sans-serif;
    font-size: 23.5px;
    color: #555;
}
```
